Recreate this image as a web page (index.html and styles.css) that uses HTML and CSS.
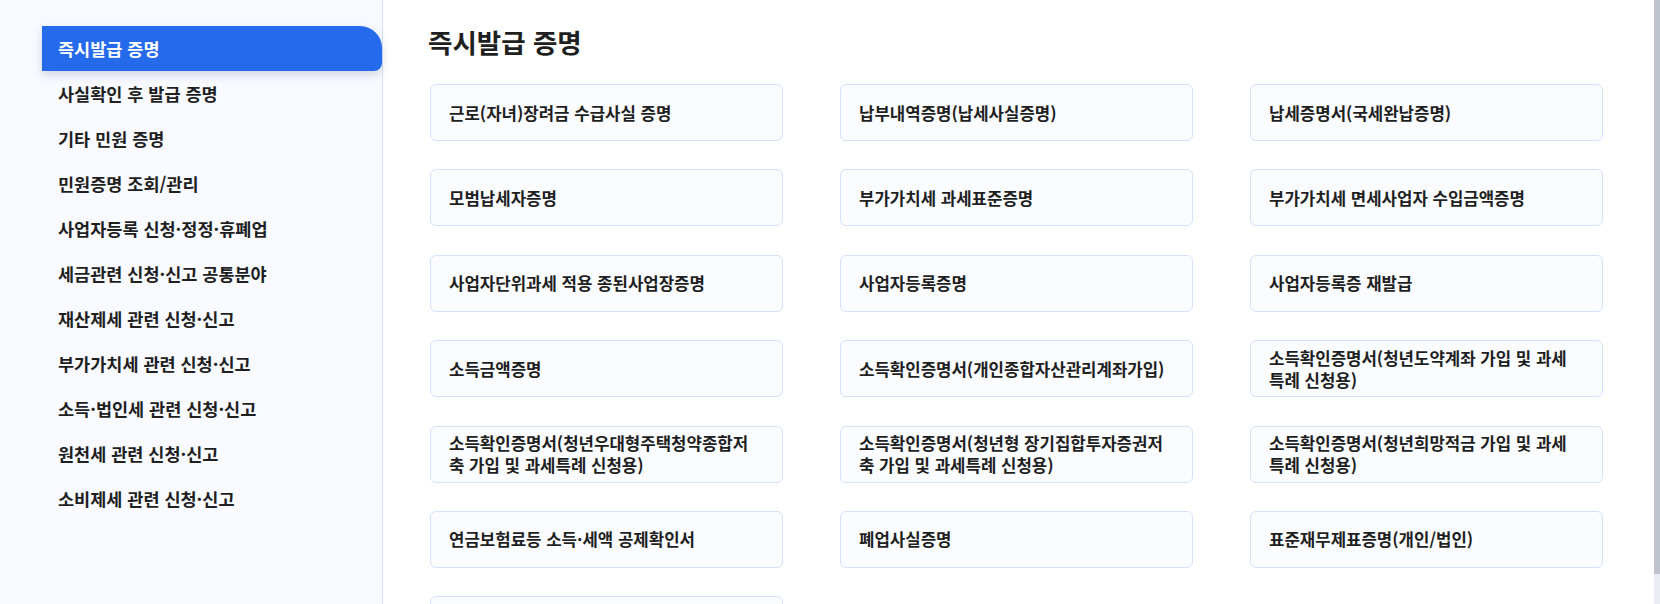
FILE: index.html
```html
<!DOCTYPE html>
<html lang="ko">
<head>
<meta charset="utf-8">
<title>즉시발급 증명</title>
<link rel="stylesheet" href="styles.css">
</head>
<body>
<div class="layout">
  <nav class="sidebar">
    <ul class="menu">
      <li class="menu-item active">즉시발급 증명</li>
      <li class="menu-item">사실확인 후 발급 증명</li>
      <li class="menu-item">기타 민원 증명</li>
      <li class="menu-item">민원증명 조회/관리</li>
      <li class="menu-item">사업자등록 신청·정정·휴폐업</li>
      <li class="menu-item">세금관련 신청·신고 공통분야</li>
      <li class="menu-item">재산제세 관련 신청·신고</li>
      <li class="menu-item">부가가치세 관련 신청·신고</li>
      <li class="menu-item">소득·법인세 관련 신청·신고</li>
      <li class="menu-item">원천세 관련 신청·신고</li>
      <li class="menu-item">소비제세 관련 신청·신고</li>
    </ul>
  </nav>
  <main class="content">
    <h1 class="title">즉시발급 증명</h1>
    <div class="grid">
      <a class="card">근로(자녀)장려금 수급사실 증명</a>
      <a class="card">납부내역증명(납세사실증명)</a>
      <a class="card">납세증명서(국세완납증명)</a>
      <a class="card">모범납세자증명</a>
      <a class="card">부가가치세 과세표준증명</a>
      <a class="card">부가가치세 면세사업자 수입금액증명</a>
      <a class="card">사업자단위과세 적용 종된사업장증명</a>
      <a class="card">사업자등록증명</a>
      <a class="card">사업자등록증 재발급</a>
      <a class="card">소득금액증명</a>
      <a class="card">소득확인증명서(개인종합자산관리계좌가입)</a>
      <a class="card">소득확인증명서(청년도약계좌 가입 및 과세특례 신청용)</a>
      <a class="card">소득확인증명서(청년우대형주택청약종합저축 가입 및 과세특례 신청용)</a>
      <a class="card">소득확인증명서(청년형 장기집합투자증권저축 가입 및 과세특례 신청용)</a>
      <a class="card">소득확인증명서(청년희망적금 가입 및 과세특례 신청용)</a>
      <a class="card">연금보험료등 소득·세액 공제확인서</a>
      <a class="card">폐업사실증명</a>
      <a class="card">표준재무제표증명(개인/법인)</a>
      <a class="card card-hidden"></a>
    </div>
  </main>
  <div class="scrollbar"><div class="scroll-thumb"></div></div>
</div>
</body>
</html>
```
FILE: styles.css
```css
html, body {
  margin: 0;
  padding: 0;
  overflow: hidden;
}
body {
  font-family: "Noto Sans CJK KR", "Noto Sans", sans-serif;
  color: #1f1f1f;
  background: #ffffff;
}
.layout {
  display: flex;
  height: 604px;
  overflow: hidden;
}
.sidebar {
  width: 382px;
  flex: 0 0 382px;
  background: #f8faff;
  border-right: 1px solid #d3e0fb;
  padding-top: 26px;
}
.menu {
  list-style: none;
  margin: 0 0 0 42px;
  padding: 0;
}
.menu-item {
  height: 45px;
  display: flex;
  align-items: center;
  padding-left: 16px;
  font-size: 17.5px;
  font-weight: 700;
  color: #1f1f1f;
  white-space: nowrap;
}
.menu-item.active {
  background: #256aeb;
  color: #ffffff;
  border-radius: 0 22px 8px 0;
  box-shadow: 0 4px 10px rgba(30, 50, 90, 0.18);
}
.content {
  flex: 1;
  min-width: 0;
  padding: 0 51px 0 47px;
}
.title {
  margin: 24px 0 0 -2px;
  font-size: 26.5px;
  font-weight: 700;
  line-height: 36px;
  color: #1f1f1f;
}
.grid {
  display: grid;
  grid-template-columns: repeat(3, 1fr);
  column-gap: 57px;
  row-gap: 28.4px;
  margin-top: 24px;
}
.card {
  box-sizing: border-box;
  height: 57px;
  display: flex;
  align-items: center;
  padding: 0 26px 0 18px;
  background: #fafcff;
  border: 1px solid #d5e2fc;
  border-radius: 6px;
  font-size: 16.75px;
  font-weight: 700;
  line-height: 22px;
  color: #1f1f1f;
}
.scrollbar {
  flex: 0 0 6px;
  width: 6px;
  background: #e9ecf3;
  display: flex;
  flex-direction: column;
}
.scroll-thumb {
  height: 574px;
  background: #bec2cb;
}
```
